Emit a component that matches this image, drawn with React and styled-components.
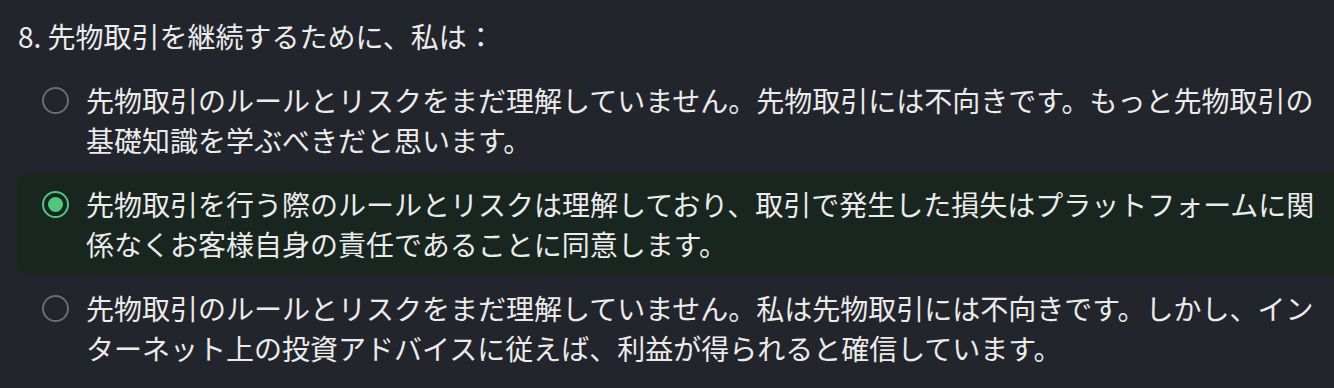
import React, { useState } from "react";
import styled, { createGlobalStyle } from "styled-components";

const Global = createGlobalStyle`
  html, body {
    margin: 0;
    padding: 0;
    background: #22252c;
    overflow: hidden;
  }
  body {
    font-family: "Noto Sans CJK JP", "Noto Sans", sans-serif;
    color: #ebebeb;
  }
`;

const Page = styled.div`
  width: 1334px;
  height: 388px;
  padding: 16px 0 0 17px;
  box-sizing: border-box;
`;

const Title = styled.h2`
  margin: 0 0 12px 1px;
  font-size: 28px;
  line-height: 40px;
  font-weight: 400;
  color: #ececec;
  white-space: nowrap;
`;

const List = styled.div`
  display: flex;
  flex-direction: column;
  width: 1334px;
`;

const Option = styled.label`
  display: flex;
  align-items: flex-start;
  gap: 17px;
  padding: 12px 25px;
  border-radius: 10px;
  background: ${(p) => (p.$selected ? "#19251f" : "transparent")};
  cursor: pointer;
`;

const Radio = styled.span`
  flex: 0 0 auto;
  width: 27px;
  height: 27px;
  margin-top: 7px;
  box-sizing: border-box;
  border-radius: 50%;
  border: 2px solid ${(p) => (p.$selected ? "#4fc77c" : "#6a6d72")};
  display: flex;
  align-items: center;
  justify-content: center;
  &::after {
    content: "";
    width: 15px;
    height: 15px;
    border-radius: 50%;
    background: #4fc77c;
    display: ${(p) => (p.$selected ? "block" : "none")};
  }
`;

const Text = styled.span`
  flex: 1 1 auto;
  font-size: 28px;
  line-height: 40px;
  color: #ebebeb;
  line-break: strict;
`;

const options = [
  "先物取引のルールとリスクをまだ理解していません。先物取引には不向きです。もっと先物取引の基礎知識を学ぶべきだと思います。",
  "先物取引を行う際のルールとリスクは理解しており、取引で発生した損失はプラットフォームに関係なくお客様自身の責任であることに同意します。",
  "先物取引のルールとリスクをまだ理解していません。私は先物取引には不向きです。しかし、インターネット上の投資アドバイスに従えば、利益が得られると確信しています。",
];

export default function App() {
  const [selected, setSelected] = useState(1);
  return (
    <>
      <Global />
      <Page>
        <Title>8. 先物取引を継続するために、私は：</Title>
        <List>
          {options.map((t, i) => (
            <Option key={i} $selected={selected === i} onClick={() => setSelected(i)}>
              <Radio $selected={selected === i} />
              <Text>{t}</Text>
            </Option>
          ))}
        </List>
      </Page>
    </>
  );
}
